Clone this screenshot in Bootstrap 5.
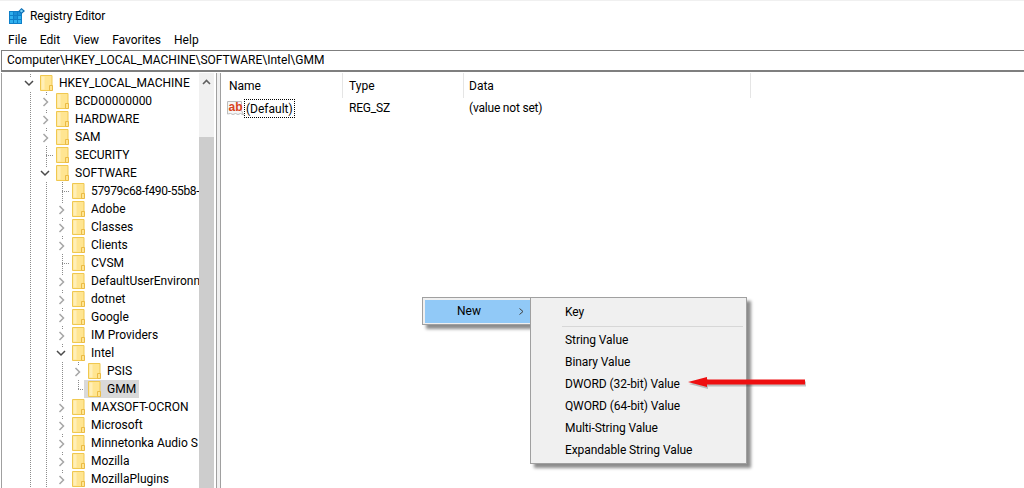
<!DOCTYPE html>
<html lang="en">
<head>
    <meta charset="UTF-8">
    <meta name="viewport" content="width=device-width, initial-scale=1.0">
    <title>Registry Editor</title>
    <link href="https://cdn.jsdelivr.net/npm/bootstrap@5.3.0/dist/css/bootstrap.min.css" rel="stylesheet">
    <style>
        html, body { height: 488px; overflow: hidden; }
        body { font-family: Roboto, "Liberation Sans", sans-serif; font-size: 12px; line-height: 18px; color: #000; background: #fff; border-top: 1px solid #f0f0f0; position: relative; }
        .title-row { height: 29px; padding-left: 9px; gap: 5px; letter-spacing: -.15px; }
        .menu-row { height: 20px; padding-left: 8px; gap: 13px; }
        .addr-row { height: 22px; margin-bottom: 1px; padding-left: 5px; margin-left: 1px; border: solid #7f7f7f; border-width: 1px 0 2px 1px; line-height: 19px; }
        .main-row { height: 415px; margin-left: 1px; border-left: 1px solid #a0a0a0; }
        .tree-pane { width: 197px; padding-top: 1px; overflow: hidden; flex: none; }
        .tree-row { height: 18px; padding-left: 19px; white-space: nowrap; }
        .tight-text { letter-spacing: -.35px; }
        .guide, .twist { width: 16px; height: 18px; flex: none; }
        .guide { background: repeating-linear-gradient(to bottom, #8c8c8c 0 1px, transparent 1px 2px) 9px 0 / 1px 100% no-repeat; }
        .guide.leaf { background: repeating-linear-gradient(to bottom, #8c8c8c 0 1px, transparent 1px 2px) 9px 0 / 1px 100% no-repeat, repeating-linear-gradient(to right, #8c8c8c 0 1px, transparent 1px 2px) 9px 9px / 7px 1px no-repeat; }
        .guide.leaf-end { background: repeating-linear-gradient(to bottom, #8c8c8c 0 1px, transparent 1px 2px) 9px 0 / 1px 10px no-repeat, repeating-linear-gradient(to right, #8c8c8c 0 1px, transparent 1px 2px) 9px 9px / 7px 1px no-repeat; }
        .twist { background: repeating-linear-gradient(to bottom, #8c8c8c 0 1px, transparent 1px 2px) 9px 0 / 1px 3px no-repeat; }
        .node-body { height: 18px; padding: 0 3px; gap: 6px; }
        .node-body.picked { background: #d9d9d9; margin-left: -1px; padding-left: 4px; }
        .scroll-col { width: 15px; background: #f0f0f0; flex: none; }
        .scroll-btn { height: 18px; }
        .scroll-thumb { margin-top: 46px; height: 351px; background: #cdcdcd; }
        .split-col { width: 5px; flex: none; background: #f0f0f0; margin-left: 2px; border-left: 1px solid #a0a0a0; border-right: 1px solid #a0a0a0; }
        .list-head { height: 25px; }
        .list-head > div { height: 25px; padding-top: 4px; border-right: 1px solid #e5e5e5; }
        .colw-name { width: 122px; padding-left: 8px; }
        .colw-type { width: 121px; padding-left: 6px; }
        .colw-data { width: 287px; padding-left: 5px; }
        .list-row { height: 20px; line-height: 18px; }
        .list-row .colw-name { padding-left: 6px; }
        .val-text { letter-spacing: -.2px; }
        .focus-box { border: 1px dotted #000; padding: 0 1px; height: 19px; }
        .ctx-box { position: absolute; background: #f0f0f0; border: 1px solid #a0a0a0; box-shadow: 4px 4px 3px rgba(0,0,0,.45); }
        .ctx-parent { left: 422px; top: 296px; width: 110px; height: 28px; padding: 2px 0 0 2px; }
        .ctx-new { height: 23px; background: #91c9f7; padding: 0 6px 0 32px; line-height: 23px; }
        .ctx-sub { left: 530px; top: 296px; width: 217px; height: 167px; padding: 3px 2px; letter-spacing: -.08px; }
        .ctx-item { height: 22px; line-height: 22px; padding-left: 32px; }
        .ctx-sep { height: 1px; margin: 3px 1px 2px 29px; background: #d7d7d7; }
        .red-arrow { position: absolute; left: 686px; top: 372px; }
    </style>
</head>
<body>
    <div class="d-flex align-items-center title-row">
        <svg width="16" height="16" viewBox="0 0 16 16">
            <rect x="0" y="3" width="13" height="13" fill="#0e7fc8"/>
            <g fill="#2fb0ee">
                <rect x="1" y="4" width="3" height="3"/><rect x="5" y="4" width="3" height="3" fill="#1a8fd8"/><rect x="9" y="4" width="3" height="3" fill="#1a8fd8"/>
                <rect x="1" y="8" width="3" height="3"/><rect x="5" y="8" width="3" height="3" fill="#1a8fd8"/><rect x="9" y="8" width="3" height="3"/>
                <rect x="1" y="12" width="3" height="3"/><rect x="5" y="12" width="3" height="3"/><rect x="9" y="12" width="3" height="3"/>
            </g>
            <path d="M12.500 0 16 3l-3.500 3L9.500 3z" fill="#0e6fb5"/>
            <path d="M12.500 1.500 14.200 3l-1.700 1.500L10.800 3z" fill="#7fd4f7"/>
        </svg>
        <span>Registry Editor</span>
    </div>
    <div class="d-flex align-items-center menu-row">
        <span>File</span><span>Edit</span><span>View</span><span>Favorites</span><span>Help</span>
    </div>
    <div class="addr-row">Computer\HKEY_LOCAL_MACHINE\SOFTWARE\Intel\GMM</div>
    <div class="d-flex main-row">
        <div class="tree-pane" id="tree"></div>
        <div class="scroll-col">
            <div class="scroll-btn d-flex align-items-center justify-content-center">
                <svg width="9" height="6" viewBox="0 0 9 6"><path d="M1 5 4.500 1.500 8 5" fill="none" stroke="#606060" stroke-width="1.600"/></svg>
            </div>
            <div class="scroll-thumb"></div>
        </div>
        <div class="split-col"></div>
        <div class="flex-grow-1">
            <div class="d-flex list-head">
                <div class="colw-name">Name</div>
                <div class="colw-type">Type</div>
                <div class="colw-data">Data</div>
            </div>
            <div class="d-flex align-items-center list-row">
                <div class="d-flex align-items-center colw-name">
                    <svg width="17" height="17" viewBox="0 0 17 17">
                        <path d="M.500 1.500h14v9l2 4.500-3-1.500-2.500 1-2.500-1-2.500 1-2.500-1-3 .5z" fill="#f6f6f6" stroke="#bdbdbd"/>
                        <text x="1.500" y="11" font-family="Liberation Sans, sans-serif" font-size="12" font-weight="700" fill="#d8431d">ab</text>
                    </svg>
                    <span class="focus-box">(Default)</span>
                </div>
                <div class="colw-type val-text">REG_SZ</div>
                <div class="colw-data val-text">(value not set)</div>
            </div>
        </div>
    </div>

    <div class="ctx-box ctx-parent">
        <div class="d-flex justify-content-between ctx-new"><span>New</span>
            <svg width="7" height="23" viewBox="0 0 7 23"><path d="M1.500 8.500 5 11.500 1.500 14.500" fill="none" stroke="#404040"/></svg>
        </div>
    </div>
    <div class="ctx-box ctx-sub">
        <div class="ctx-item">Key</div>
        <div class="ctx-sep"></div>
        <div class="ctx-item">String Value</div>
        <div class="ctx-item">Binary Value</div>
        <div class="ctx-item">DWORD (32-bit) Value</div>
        <div class="ctx-item">QWORD (64-bit) Value</div>
        <div class="ctx-item">Multi-String Value</div>
        <div class="ctx-item">Expandable String Value</div>
    </div>
    <svg class="red-arrow" width="124" height="20" viewBox="0 0 124 20">
        <path d="M2 9 21 4v2.500h98v5H21V14z" fill="#000" opacity=".22" transform="translate(1 2)"/>
        <path d="M2 9 21 4v2.500h98v5H21V14z" fill="#ee0f10"/>
    </svg>

    <script>
        document.addEventListener("DOMContentLoaded", function() {
            // nombre, nivel, tipo: o = abierto, c = cerrado, l = hoja, e = ultima hoja
            let nodos = [
                ["HKEY_LOCAL_MACHINE", 0, "o"],
                ["BCD00000000", 1, "c"],
                ["HARDWARE", 1, "c"],
                ["SAM", 1, "c"],
                ["SECURITY", 1, "l"],
                ["SOFTWARE", 1, "o"],
                ["57979c68-f490-55b8-", 2, "l", "tight-text"],
                ["Adobe", 2, "c"],
                ["Classes", 2, "c"],
                ["Clients", 2, "c"],
                ["CVSM", 2, "l"],
                ["DefaultUserEnvironn", 2, "c"],
                ["dotnet", 2, "c"],
                ["Google", 2, "c"],
                ["IM Providers", 2, "c"],
                ["Intel", 2, "o"],
                ["PSIS", 3, "c"],
                ["GMM", 3, "e"],
                ["MAXSOFT-OCRON", 2, "c"],
                ["Microsoft", 2, "c"],
                ["Minnetonka Audio S", 2, "c"],
                ["Mozilla", 2, "c"],
                ["MozillaPlugins", 2, "c"]
            ];
            let folder = '<svg width="13" height="16" viewBox="0 0 13 16" class="flex-shrink-0"><path d="M.5.500h11.500v15H.500z" fill="#ffe591" stroke="#f0c850"/><path d="M1.500 1.500h3v13h-3z" fill="#ffefb8"/><path d="M9.500 10.500h3v5h-3z" fill="#ffe591" stroke="#ebbb45"/></svg>';
            let abierto = '<svg width="10" height="18" viewBox="0 0 10 18"><path d="M1 7 5 11 9 7" fill="none" stroke="#4a4a4a" stroke-width="1.500"/></svg>';
            let cerrado = '<svg width="10" height="18" viewBox="0 0 10 18"><path d="M3.500 6 7.500 10 3.500 14" fill="none" stroke="#a6a6a6" stroke-width="1.500"/></svg>';
            let tree = document.getElementById("tree");
            nodos.forEach(function(n) {
                let html = "";
                for (let i = 0; i < n[1]; i++) {
                    html += '<span class="guide"></span>';
                }
                if (n[2] === "o") html += '<span class="twist d-flex justify-content-center">' + abierto + '</span>';
                if (n[2] === "c") html += '<span class="twist d-flex justify-content-center">' + cerrado + '</span>';
                if (n[2] === "l") html += '<span class="guide leaf"></span>';
                if (n[2] === "e") html += '<span class="guide leaf-end"></span>';
                let cuerpo = n[0] === "GMM" ? "node-body picked" : "node-body";
                html += '<span class="d-flex align-items-center ' + cuerpo + '">' + folder + '<span class="' + (n[3] || "") + '">' + n[0] + '</span></span>';
                let fila = document.createElement("div");
                fila.className = "d-flex tree-row";
                fila.innerHTML = html;
                tree.appendChild(fila);
            });
        });
    </script>
</body>
</html>
